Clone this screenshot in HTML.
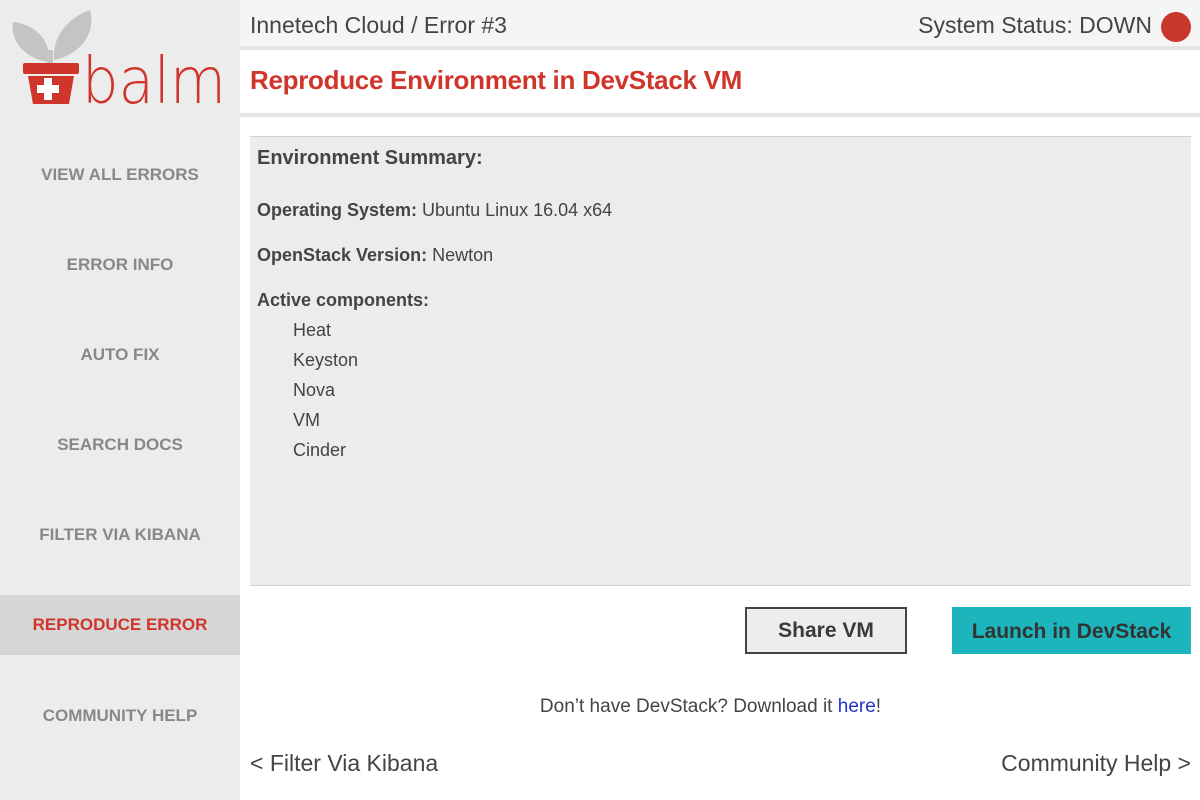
<!DOCTYPE html>
<html><head><meta charset="utf-8"><style>
*{margin:0;padding:0;box-sizing:border-box}
body{width:1200px;height:800px;overflow:hidden;background:#fff;font-family:"Liberation Sans",sans-serif;color:#444;position:relative}
.side{position:absolute;left:0;top:0;width:240px;height:800px;background:#ececec}
.nav{position:absolute;left:0;width:240px;height:60px;line-height:60px;text-align:center;font-weight:bold;font-size:17px;color:#888}
.nav.act{background:#d6d6d6;color:#d0352b}
.top{position:absolute;left:240px;top:0;width:960px;height:50px;background:#f5f5f5;border-bottom:4px solid #e6e6e6}
.top .l{position:absolute;left:10px;top:12px;font-size:23px;color:#444}
.top .r{position:absolute;right:48px;top:12px;font-size:23px;color:#444}
.dot{position:absolute;right:9px;top:12px;width:30px;height:30px;border-radius:50%;background:#c8392b}
.title{position:absolute;left:250px;top:65px;font-size:26px;font-weight:bold;color:#d0352b;letter-spacing:-0.3px}
.sep{position:absolute;left:240px;top:113px;width:960px;height:4px;background:#e6e6e6}
.panel{position:absolute;left:250px;top:136px;width:941px;height:450px;background:#ececec;border-top:1px solid #d2d2d2;border-bottom:1px solid #d2d2d2}
.panel div{position:absolute;font-size:18px;color:#444}
b{font-weight:bold}
.btn1{position:absolute;left:745px;top:607px;width:162px;height:47px;border:2px solid #444;background:#ededed;text-align:center;line-height:43px;font-weight:bold;font-size:21px;color:#3a3a3a}
.btn2{position:absolute;left:952px;top:607px;width:239px;height:47px;background:#1bb5bb;text-align:center;line-height:50px;font-weight:bold;font-size:21px;color:#333}
.dl{position:absolute;left:240px;width:941px;top:696px;text-align:center;font-size:19px;color:#444}
.dl a{color:#2233cc;text-decoration:none}
.prev{position:absolute;left:250px;top:750px;font-size:23px;color:#444}
.next{position:absolute;right:9px;top:750px;font-size:23px;color:#444}
</style></head><body>
<div class="side">
<svg width="240" height="120" style="position:absolute;left:0;top:0">
<path d="M48 62 C22 58 10 38 13 22 C32 24 52 38 48 62Z" fill="#c4c4c4"/>
<path d="M54 60 C52 36 68 18 90 10 C96 32 82 54 54 60Z" fill="#c4c4c4"/>
<rect x="47" y="50" width="6" height="14" fill="#c4c4c4"/>
<rect x="23" y="63" width="56" height="11" rx="2" fill="#d0352b"/>
<path d="M28 76 L74 76 L69 104 L33 104Z" fill="#d0352b"/>
<rect x="44" y="78" width="8" height="22" fill="#fff"/>
<rect x="37" y="85" width="22" height="8" fill="#fff"/>
<text x="82" y="103" font-family="DejaVu Sans,Liberation Sans,sans-serif" font-size="64" font-weight="200" fill="#d0352b" textLength="144" lengthAdjust="spacingAndGlyphs">balm</text>
</svg>
<div class="nav" style="top:145px">VIEW ALL ERRORS</div>
<div class="nav" style="top:235px">ERROR INFO</div>
<div class="nav" style="top:325px">AUTO FIX</div>
<div class="nav" style="top:415px">SEARCH DOCS</div>
<div class="nav" style="top:505px">FILTER VIA KIBANA</div>
<div class="nav act" style="top:595px">REPRODUCE ERROR</div>
<div class="nav" style="top:686px">COMMUNITY HELP</div>
</div>
<div class="top"><span class="l">Innetech Cloud / Error #3</span><span class="r">System Status: DOWN</span><span class="dot"></span></div>
<div class="title">Reproduce Environment in DevStack VM</div>
<div class="sep"></div>
<div class="panel">
<div style="left:7px;top:10px;font-size:20px;font-weight:bold">Environment Summary:</div>
<div style="left:7px;top:63px"><b>Operating System:</b> Ubuntu Linux 16.04 x64</div>
<div style="left:7px;top:108px"><b>OpenStack Version:</b> Newton</div>
<div style="left:7px;top:153px"><b>Active components:</b></div>
<div style="left:43px;top:183px">Heat</div>
<div style="left:43px;top:213px">Keyston</div>
<div style="left:43px;top:243px">Nova</div>
<div style="left:43px;top:273px">VM</div>
<div style="left:43px;top:303px">Cinder</div>
</div>
<div class="btn1">Share VM</div>
<div class="btn2">Launch in DevStack</div>
<div class="dl">Don’t have DevStack? Download it <a>here</a>!</div>
<div class="prev">&lt; Filter Via Kibana</div>
<div class="next">Community Help &gt;</div>
</body></html>
